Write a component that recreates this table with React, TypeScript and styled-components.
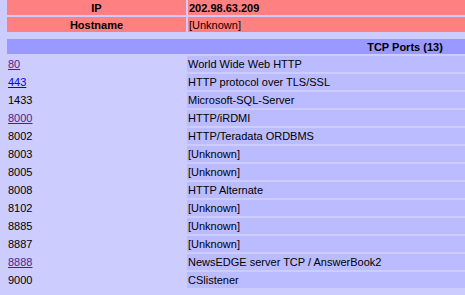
import React from "react";
import styled, { createGlobalStyle } from "styled-components";

const GlobalStyle = createGlobalStyle`
  html, body {
    margin: 0;
    padding: 0;
    overflow: hidden;
    background: #ccccff;
  }
  body {
    font-family: "Liberation Sans", Arial, sans-serif;
    font-size: 11px;
    color: #000;
  }
`;

const Page = styled.div`
  display: flex;
  flex-direction: column;
  gap: 3px;
  margin-top: -2px;
  padding-left: 5px;
`;

const Table = styled.table`
  width: 800px;
  border-spacing: 2px;
  table-layout: fixed;
`;

const Col = styled.col<{ $width?: number }>`
  width: ${(p) => (p.$width ? `${p.$width}px` : "auto")};
`;

const HostLabel = styled.th`
  height: 15px;
  padding: 0 1px;
  background: #ff8080;
  font-weight: bold;
  text-align: center;
`;

const HostValue = styled.td<{ $bold?: boolean }>`
  height: 15px;
  padding: 0 1px;
  background: #ff8080;
  font-weight: ${(p) => (p.$bold ? "bold" : "normal")};
`;

const SectionHead = styled.th`
  height: 15px;
  padding: 0 1px;
  background: #9999ff;
  font-weight: bold;
  text-align: center;
`;

const PortCell = styled.td`
  height: 16px;
  padding: 0 1px;
`;

const ServiceCell = styled.td`
  height: 16px;
  padding: 0 1px;
  background: #bbbbff;
`;

const PortLink = styled.a<{ $visited?: boolean }>`
  color: ${(p) => (p.$visited ? "#551a8b" : "#0000ee")};
  text-decoration: underline;
`;

type Port = { port: string; service: string; link?: "visited" | "new" };

const PORTS: Port[] = [
  { port: "80", service: "World Wide Web HTTP", link: "visited" },
  { port: "443", service: "HTTP protocol over TLS/SSL", link: "new" },
  { port: "1433", service: "Microsoft-SQL-Server" },
  { port: "8000", service: "HTTP/iRDMI", link: "visited" },
  { port: "8002", service: "HTTP/Teradata ORDBMS" },
  { port: "8003", service: "[Unknown]" },
  { port: "8005", service: "[Unknown]" },
  { port: "8008", service: "HTTP Alternate" },
  { port: "8102", service: "[Unknown]" },
  { port: "8885", service: "[Unknown]" },
  { port: "8887", service: "[Unknown]" },
  { port: "8888", service: "NewsEDGE server TCP / AnswerBook2", link: "visited" },
  { port: "9000", service: "CSlistener" },
];

export default function App() {
  return (
    <>
      <GlobalStyle />
      <Page>
        <Table>
          <colgroup>
            <Col $width={179} />
            <Col />
          </colgroup>
          <tbody>
            <tr>
              <HostLabel>IP</HostLabel>
              <HostValue $bold>202.98.63.209</HostValue>
            </tr>
            <tr>
              <HostLabel>Hostname</HostLabel>
              <HostValue>[Unknown]</HostValue>
            </tr>
          </tbody>
        </Table>
        <Table>
          <colgroup>
            <Col $width={178} />
            <Col />
          </colgroup>
          <tbody>
            <tr>
              <SectionHead colSpan={2}>TCP Ports ({PORTS.length})</SectionHead>
            </tr>
            {PORTS.map((p) => (
              <tr key={p.port}>
                <PortCell>
                  {p.link ? (
                    <PortLink href="#" $visited={p.link === "visited"}>
                      {p.port}
                    </PortLink>
                  ) : (
                    p.port
                  )}
                </PortCell>
                <ServiceCell>{p.service}</ServiceCell>
              </tr>
            ))}
          </tbody>
        </Table>
      </Page>
    </>
  );
}
